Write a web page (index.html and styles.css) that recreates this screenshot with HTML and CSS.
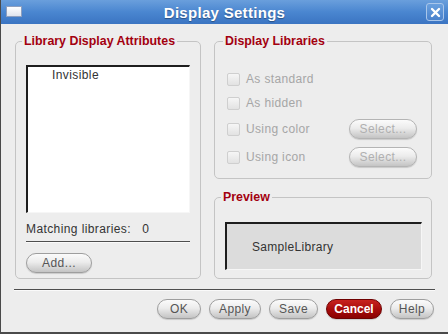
FILE: index.html
```html
<!DOCTYPE html>
<html>
<head>
    <title>Display Settings</title>
    <link rel="stylesheet" href="styles.css">
</head>
<body>
    <div class="window">
        <div class="titlebar">
            <span class="win-icon"></span>
            <span class="title">Display Settings</span>
            <span class="close-btn">
                <svg width="11" height="11" viewBox="0 0 11 11">
                    <path d="M2 2 L9 9 M9 2 L2 9" stroke="#fff" stroke-width="2.4" stroke-linecap="round"/>
                </svg>
            </span>
        </div>

        <div class="content">
            <div class="panels">
                <!-- Left: attributes list -->
                <fieldset class="group group-attrs">
                    <legend>Library Display Attributes</legend>
                    <div class="listbox">
                        <div class="list-item">Invisible</div>
                    </div>
                    <div class="matching">Matching libraries:&nbsp;&nbsp; 0</div>
                    <div class="rule"></div>
                    <button class="btn add-btn">Add...</button>
                </fieldset>

                <div class="right-col">
                    <fieldset class="group group-libs">
                        <legend>Display Libraries</legend>
                        <div class="check-row">
                            <span class="checkbox"></span>
                            <span class="check-label">As standard</span>
                        </div>
                        <div class="check-row">
                            <span class="checkbox"></span>
                            <span class="check-label">As hidden</span>
                        </div>
                        <div class="check-row tall">
                            <span class="checkbox"></span>
                            <span class="check-label">Using color</span>
                            <button class="btn select-btn" disabled>Select...</button>
                        </div>
                        <div class="check-row tall">
                            <span class="checkbox"></span>
                            <span class="check-label">Using icon</span>
                            <button class="btn select-btn" disabled>Select...</button>
                        </div>
                    </fieldset>

                    <fieldset class="group group-preview">
                        <legend>Preview</legend>
                        <div class="preview-box">SampleLibrary</div>
                    </fieldset>
                </div>
            </div>

            <div class="separator"></div>

            <div class="actions">
                <button class="btn ok-btn">OK</button>
                <button class="btn apply-btn">Apply</button>
                <button class="btn save-btn">Save</button>
                <button class="btn cancel-btn">Cancel</button>
                <button class="btn help-btn">Help</button>
            </div>
        </div>
    </div>
</body>
</html>
```

FILE: styles.css
```css
body {
    margin: 0;
    font-family: 'Liberation Sans', Arial, sans-serif;
    font-size: 12px;
    color: #333;
    background: #ededed;
}
.window {
    width: 448px;
    height: 334px;
    box-sizing: border-box;
    border-left: 1px solid #4a4a4a;
    border-bottom: 2px solid #4a4a4a;
    background: #ededed;
}
.titlebar {
    height: 24px;
    display: flex;
    align-items: center;
    justify-content: center;
    position: relative;
    background: linear-gradient(#6a9fdc, #4a86d0 50%, #3b74c2);
    box-sizing: border-box;
}
.win-icon {
    position: absolute;
    left: 5px;
    top: 6px;
    width: 14px;
    height: 9px;
    border: 1px solid #8d9fbf;
    background: linear-gradient(#ffffff, #dfe4ee);
}
.title {
    color: #fff;
    font-weight: bold;
    font-size: 15px;
    letter-spacing: 0.3px;
    text-shadow: 0 1px 1px rgba(0,0,0,0.35);
}
.close-btn {
    position: absolute;
    left: 425px;
    top: 3px;
    width: 16px;
    height: 16px;
    border: 1px solid #a9c6ea;
    border-radius: 3px;
    background: linear-gradient(#6aa0de, #4a82cc);
    display: flex;
    align-items: center;
    justify-content: center;
}
.content {
    padding: 10px 14px 0 14px;
}
.panels {
    display: flex;
    gap: 13px;
}
.group {
    margin: 0;
    box-sizing: border-box;
    border: 1px solid #c4c4c4;
    border-radius: 5px;
    min-width: 0;
}
.group legend {
    color: #a3000f;
    font-weight: bold;
    font-size: 12.4px;
    line-height: 14px;
    padding: 0 2px;
    margin-left: -4px;
}
.group-attrs {
    width: 186px;
    height: 245px;
    padding: 17px 10px 0 10px;
}
.listbox {
    height: 148px;
    background: #fff;
    border-top: 2px solid #1e1e1e;
    border-left: 2px solid #1e1e1e;
    border-right: 1px solid #f6f6f6;
    border-bottom: 1px solid #f6f6f6;
    box-sizing: border-box;
}
.list-item {
    padding: 1px 0 0 24px;
    line-height: 14px;
    letter-spacing: 0.4px;
}
.matching {
    margin-top: 9px;
    line-height: 14px;
    letter-spacing: 0.4px;
}
.rule {
    margin-top: 5px;
    border-top: 1px solid #4e4e4e;
    border-bottom: 1px solid #fafafa;
}
.btn {
    font-family: 'Liberation Sans', Arial, sans-serif;
    font-size: 12px;
    letter-spacing: 0.4px;
    color: #555;
    height: 20px;
    padding: 0;
    border: 1px solid #9e9e9e;
    border-radius: 10px;
    background: linear-gradient(#fbfbfb, #ececec 45%, #d2d2d2 80%, #c4c4c4);
    box-shadow: 0 1px 1px rgba(0,0,0,0.15);
    cursor: pointer;
}
.add-btn {
    width: 66px;
    margin-top: 10px;
}
.right-col {
    width: 218px;
    display: flex;
    flex-direction: column;
    gap: 11px;
}
.group-libs {
    height: 145px;
    padding: 19px 14px 0 12px;
}
.check-row {
    height: 24px;
    display: flex;
    align-items: center;
}
.check-row.tall {
    height: 28px;
}
.checkbox {
    width: 11px;
    height: 11px;
    border: 1px solid #cfcfcf;
    border-radius: 2px;
    background: linear-gradient(#f6f6f6, #e2e2e2);
    margin-right: 6px;
}
.check-label {
    color: #a6a6a6;
    letter-spacing: 0.35px;
}
.select-btn {
    margin-left: auto;
    width: 68px;
    color: #b0b0b0;
    border-color: #b4b4b4;
    cursor: default;
}
.group-preview {
    height: 89px;
    padding: 18px 9px 0 10px;
}
.preview-box {
    height: 48px;
    box-sizing: border-box;
    background: #dcdcdc;
    border-top: 2px solid #1e1e1e;
    border-left: 2px solid #1e1e1e;
    border-right: 1px solid #f6f6f6;
    border-bottom: 1px solid #f6f6f6;
    padding: 16px 0 0 25px;
    line-height: 14px;
    letter-spacing: 0.3px;
}
.separator {
    margin-top: 10px;
    margin-left: -1px;
    margin-right: -1px;
    border-top: 1px solid #4e4e4e;
    border-bottom: 1px solid #fafafa;
}
.actions {
    display: flex;
    justify-content: flex-end;
    gap: 8px;
    margin-top: 8px;
}
.ok-btn { width: 44px; }
.apply-btn { width: 52px; }
.save-btn { width: 49px; }
.help-btn { width: 44px; }
.cancel-btn {
    width: 56px;
    color: #fff;
    font-weight: bold;
    letter-spacing: 0;
    border-color: #6e0000;
    background: linear-gradient(#c8231f, #a80c0c 50%, #8a0000);
}
```
